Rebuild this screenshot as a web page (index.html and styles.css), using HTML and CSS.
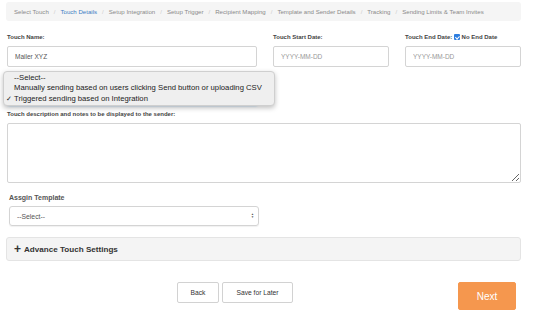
FILE: index.html
```html
<!DOCTYPE html>
<html lang="en">
<head>
	<meta charset="UTF-8">
	<meta name="viewport" content="width=device-width, initial-scale=1.0">
	<title>Touch Details</title>
	<link rel="stylesheet" href="styles.css">
</head>
<body>
	<div class="page">
		<ol class="crumbs">
			<li>Select Touch</li>
			<li class="crumbs__active">Touch Details</li>
			<li>Setup Integration</li>
			<li>Setup Trigger</li>
			<li>Recipient Mapping</li>
			<li>Template and Sender Details</li>
			<li>Tracking</li>
			<li>Sending Limits &amp; Team Invites</li>
		</ol>

		<div class="row">
			<div class="field">
				<label class="label">Touch Name:</label>
				<input class="input" type="text" value="Mailer XYZ">
			</div>
			<div class="field">
				<label class="label">Touch Start Date:</label>
				<input class="input" type="text" placeholder="YYYY-MM-DD">
			</div>
			<div class="field">
				<label class="label">Touch End Date: <span class="check"></span> No End Date</label>
				<input class="input" type="text" placeholder="YYYY-MM-DD">
			</div>
		</div>

		<div class="field field--type">
			<div class="fake-select fake-select--focus"></div>
			<ul class="menu">
				<li>--Select--</li>
				<li>Manually sending based on users clicking Send button or uploading CSV</li>
				<li class="menu__checked">Triggered sending based on Integration</li>
			</ul>
		</div>

		<div class="field">
			<label class="label">Touch description and notes to be displayed to the sender:</label>
			<textarea class="textarea"></textarea>
		</div>

		<div class="field field--template">
			<label class="label label--big">Assgin Template</label>
			<div class="fake-select">
				<span>--Select--</span>
				<span class="arrows">&#9650;<br>&#9660;</span>
			</div>
		</div>

		<div class="panel">
			<span class="plus">+</span> Advance Touch Settings
		</div>

		<div class="actions">
			<div class="actions__left">
				<button class="btn btn--back">Back</button>
				<button class="btn btn--wide">Save for Later</button>
			</div>
			<button class="btn btn--next">Next</button>
		</div>
	</div>
</body>
</html>
```
FILE: styles.css
```css
* { box-sizing: border-box }
body {
	margin: 0;
	background: #fff;
	color: #333;
	font-family: 'Liberation Sans', Arial, sans-serif;
}
.page {
	width: 515px;
	margin-left: 6px;
	padding-top: 2px;
}
.crumbs {
	display: flex;
	height: 19px;
	margin: 0;
	padding: 0 0 0 8px;
	align-items: center;
	list-style: none;
	background: #f5f5f5;
	border-radius: 3px;
	font-size: 6.1px;
	color: #8a8a8a;
}
.crumbs li + li:before {
	content: '/';
	padding: 0 5px;
	color: #ccc;
}
.crumbs .crumbs__active { color: #3c7dc4 }

.row {
	display: grid;
	grid-template-columns: 251px 117px 117px;
	gap: 15px;
	margin-top: 12px;
}
.field {
	display: flex;
	flex-direction: column;
	position: relative;
	padding-left: 1px;
}
.label {
	display: block;
	height: 8px;
	margin-bottom: 5px;
	font-size: 6px;
	line-height: 8px;
	font-weight: bold;
	color: #444;
}
.check {
	display: inline-block;
	position: relative;
	width: 6px;
	height: 6px;
	vertical-align: -1px;
	border-radius: 1px;
	background: #2d7ee0;
}
.check:after {
	content: '';
	position: absolute;
	left: 1.8px;
	top: 0.6px;
	width: 1.5px;
	height: 3px;
	border: solid #fff;
	border-width: 0 1px 1px 0;
	transform: rotate(45deg);
}
.input {
	height: 21px;
	padding: 0 7px;
	border: 1px solid #d4d4d4;
	border-radius: 2px;
	font: 6.5px 'Liberation Sans', Arial, sans-serif;
	color: #555;
}
.input::placeholder { color: #999 }

.field--type {
	width: 252px;
	margin-top: 19px;
	margin-bottom: 4px;
}
.fake-select {
	display: flex;
	height: 20px;
	padding: 0 4px 0 7px;
	justify-content: space-between;
	align-items: center;
	border: 1px solid #d4d4d4;
	border-radius: 3px;
	font-size: 6.8px;
	color: #555;
	box-shadow: 0 1px 1px rgba(0, 0, 0, .06);
}
.fake-select--focus {
	border-color: #7aaee0;
	box-shadow: 0 0 2px rgba(102, 175, 233, .6);
}
.arrows {
	font-size: 3px;
	line-height: 3.5px;
	color: #555;
}
.menu {
	position: absolute;
	top: -15px;
	left: -3px;
	width: 272px;
	height: 35px;
	margin: 0;
	padding: 1px 0 0;
	list-style: none;
	background: #efefef;
	border: 1px solid #cfcfcf;
	border-radius: 4px;
	box-shadow: 0 2px 5px rgba(0, 0, 0, .25);
	font-size: 7.7px;
	line-height: 10.3px;
	color: #222;
}
.menu li {
	padding-left: 10px;
	white-space: nowrap;
}
.menu .menu__checked { position: relative }
.menu .menu__checked:before {
	content: '\2713';
	position: absolute;
	left: 2px;
	font-size: 6.5px;
}

.textarea {
	height: 60px;
	border: 1px solid #d4d4d4;
	border-radius: 2px;
	resize: vertical;
}
.field--template {
	width: 253px;
	margin-top: 11px;
	padding-left: 3px;
}
.label--big {
	font-size: 7px;
	color: #555;
	margin-bottom: 4px;
}
.panel {
	display: flex;
	height: 24px;
	margin-top: 11px;
	padding-left: 7px;
	align-items: center;
	background: #f4f4f4;
	border: 1px solid #e4e4e4;
	border-radius: 3px;
	font-size: 8.1px;
	font-weight: bold;
	color: #333;
}
.plus {
	margin-right: 3px;
	font-size: 12px;
	font-weight: bold;
	line-height: 8px;
}
.actions {
	display: flex;
	margin-top: 21px;
	justify-content: space-between;
	align-items: flex-start;
}
.actions__left {
	display: flex;
	gap: 3px;
	margin-left: 171px;
}
.btn {
	height: 21px;
	padding: 0;
	background: #fff;
	border: 1px solid #d2d2d2;
	border-radius: 2px;
	font: 6.7px 'Liberation Sans', Arial, sans-serif;
	color: #333;
}
.btn--back { width: 42px }
.btn--wide { width: 71px }
.btn--next {
	width: 58px;
	height: 28px;
	margin-right: 5px;
	background: #f5974e;
	border-color: #f5974e;
	font-size: 10px;
	color: #fff;
}
```
